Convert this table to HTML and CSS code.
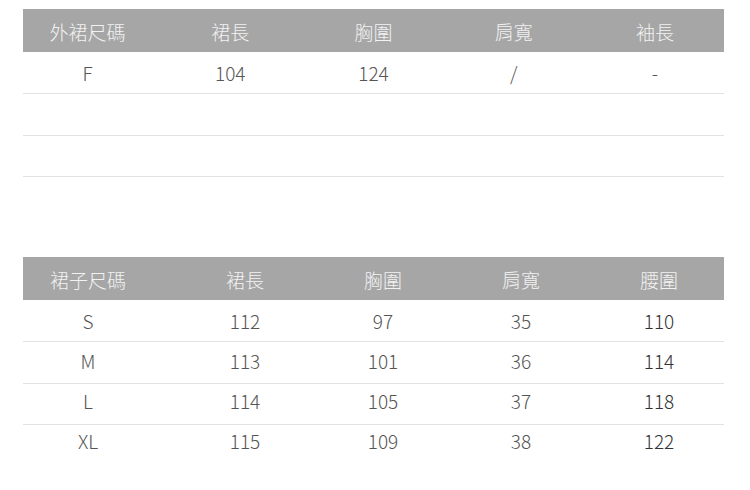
FILE: index.html
```html
<!DOCTYPE html>
<html lang="zh-Hant">
<head>
<meta charset="utf-8">
<link rel="stylesheet" href="styles.css">
</head>
<body>
<div class="page">
  <div class="table t1">
    <div class="row head">
      <div class="c">外裙尺碼</div><div class="c">裙長</div><div class="c">胸圍</div><div class="c">肩寬</div><div class="c">袖長</div>
    </div>
    <div class="row">
      <div class="c">F</div><div class="c">104</div><div class="c">124</div><div class="c">/</div><div class="c">-</div>
    </div>
    <div class="row">
      <div class="c"></div><div class="c"></div><div class="c"></div><div class="c"></div><div class="c"></div>
    </div>
    <div class="row">
      <div class="c"></div><div class="c"></div><div class="c"></div><div class="c"></div><div class="c"></div>
    </div>
  </div>

  <div class="table t2">
    <div class="row head">
      <div class="c">裙子尺碼</div><div class="c">裙長</div><div class="c">胸圍</div><div class="c">肩寬</div><div class="c">腰圍</div>
    </div>
    <div class="row">
      <div class="c">S</div><div class="c">112</div><div class="c">97</div><div class="c">35</div><div class="c">110</div>
    </div>
    <div class="row">
      <div class="c">M</div><div class="c">113</div><div class="c">101</div><div class="c">36</div><div class="c">114</div>
    </div>
    <div class="row">
      <div class="c">L</div><div class="c">114</div><div class="c">105</div><div class="c">37</div><div class="c">118</div>
    </div>
    <div class="row last">
      <div class="c">XL</div><div class="c">115</div><div class="c">109</div><div class="c">38</div><div class="c">122</div>
    </div>
  </div>
</div>
</body>
</html>
```

FILE: styles.css
```css
html, body {
  margin: 0;
  padding: 0;
  background: #ffffff;
}
body {
  font-family: "Noto Sans CJK TC", "Noto Sans", sans-serif;
  font-weight: 300;
  color: #555555;
}
.page {
  width: 701px;
  padding: 9px 0 0 23px;
  display: flex;
  flex-direction: column;
  gap: 80px;
}
.table {
  display: flex;
  flex-direction: column;
}
.row {
  display: grid;
  box-sizing: border-box;
  height: 42px;
  border-bottom: 1px solid #e2e2e2;
  align-items: center;
  font-size: 19px;
}
.row:nth-child(4),
.row:nth-child(5) {
  height: 41px;
}
.t1 .row {
  grid-template-columns: repeat(5, 1fr);
}
.t2 .row {
  grid-template-columns: 149px repeat(4, 1fr);
}
.row.head {
  height: 43px;
  background: #a6a6a6;
  color: #f2f2f2;
  border-bottom: none;
}
.row.last {
  border-bottom: none;
}
.c {
  text-align: center;
  line-height: 1;
}
.row.head .c {
  padding-top: 2px;
}
.t2 .row:nth-child(3) .c { padding-bottom: 4px; }
.t2 .row:nth-child(4) .c { padding-bottom: 8px; }
.t2 .row:nth-child(5) .c { padding-bottom: 10px; }
.t1 .c:nth-child(1) { padding-right: 11px; }
.t1 .c:nth-child(2) { padding-right: 6px; }
.t1 .c:nth-child(5) { padding-left: 2px; }
.t2 .c:nth-child(1) { padding-right: 19px; }
.t2 .c:nth-child(n+2) { padding-left: 8px; }
.t2 .row:not(.head) .c:nth-child(5) { color: #333333; }
```
